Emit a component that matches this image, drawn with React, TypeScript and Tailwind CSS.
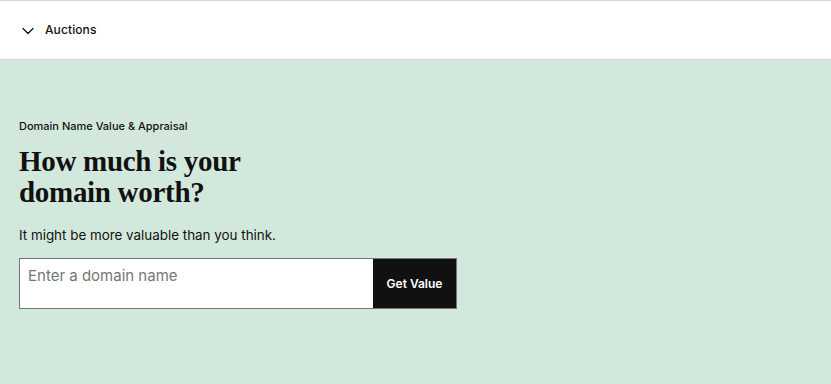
import React from 'react'

const App = () => {
  return (
    <div className="w-[831px] h-[384px] overflow-hidden bg-[#d3e8dc] font-['Inter',sans-serif] text-[#111111]">
      {/* header strip */}
      <div className="h-[60px] bg-white border-t border-b border-[#d6d6d6] flex items-center pl-[21px] gap-[10px]">
        <svg width="14" height="14" viewBox="0 0 14 14" fill="none" className="mt-[1px]">
          <path d="M2 4.5 L7 9.5 L12 4.5" stroke="#111" strokeWidth="1.3" strokeLinecap="round" strokeLinejoin="round" />
        </svg>
        <span className="text-[12px] font-medium tracking-[0.1px]">Auctions</span>
      </div>

      {/* appraisal hero */}
      <div className="pl-[19px] pt-[59px]">
        <div className="text-[11px] font-medium leading-[14px]">Domain Name Value &amp; Appraisal</div>
        <h1 className="mt-[13px] font-['Liberation_Serif',serif] font-bold text-[29px] leading-[31px] tracking-[-0.3px]">
          How much is your
          <br />
          domain worth?
        </h1>
        <p className="mt-[18px] text-[13.4px] leading-[18px]">It might be more valuable than you think.</p>
        <div className="mt-[14px] flex w-[438px] h-[51px] border border-[#767676] bg-white">
          <input
            placeholder="Enter a domain name"
            className="flex-1 min-w-0 self-start pt-[7px] px-[8px] text-[15px] leading-[20px] outline-none placeholder:text-[#767676] bg-transparent"
          />
          <button className="w-[83px] bg-[#111111] text-white text-[12px] font-semibold">Get Value</button>
        </div>
      </div>
    </div>
  )
}

export default App
